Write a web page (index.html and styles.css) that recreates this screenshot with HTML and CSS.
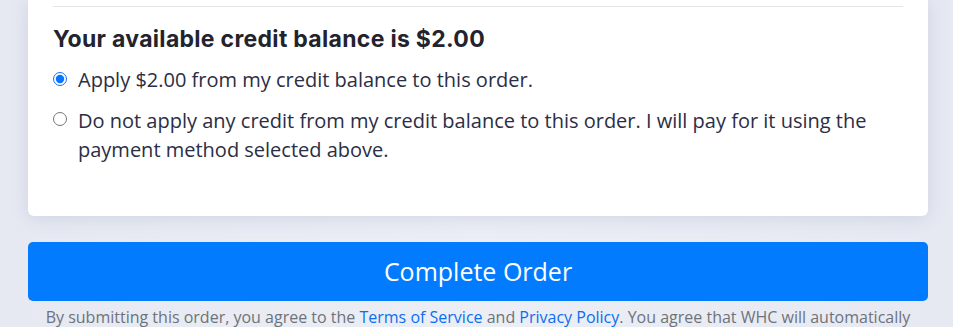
FILE: index.html
```html
<!DOCTYPE html>
<html lang="en">
<head>
<meta charset="utf-8">
<title>Checkout</title>
<link rel="stylesheet" href="styles.css">
</head>
<body>
<div class="page">
  <div class="card">
    <hr class="divider">
    <h3 class="credit-title">Your available credit balance is $2.00</h3>
    <div class="options">
      <label class="option">
        <input type="radio" name="applycredit" checked>
        <span>Apply $2.00 from my credit balance to this order.</span>
      </label>
      <label class="option">
        <input type="radio" name="applycredit">
        <span>Do not apply any credit from my credit balance to this order. I will pay for it using the payment method selected above.</span>
      </label>
    </div>
  </div>
  <button class="complete-btn" type="button">Complete Order</button>
  <p class="terms">By submitting this order, you agree to the <a href="#">Terms of Service</a> and <a href="#">Privacy Policy</a>. You agree that WHC will automatically</p>
</div>
</body>
</html>
```
FILE: styles.css
```css
html, body {
  margin: 0;
  padding: 0;
}
body {
  background: linear-gradient(90deg, #e6e9f2 0%, #eceef5 50%, #e6e9f2 100%);
  font-family: "Open Sans", "Liberation Sans", sans-serif;
  height: 327px;
  overflow: hidden;
}
.page {
  width: 900px;
  margin: 0 0 0 28px;
}
.card {
  background: #fff;
  border-radius: 0 0 6px 6px;
  padding: 6px 25px 52px;
  box-shadow: 0 2px 18px rgba(160, 170, 200, 0.35);
}
.divider {
  border: 0;
  border-top: 1px solid #e4e5e8;
  margin: 0;
}
.credit-title {
  font-family: "Inter", "Liberation Sans", sans-serif;
  font-weight: 700;
  font-size: 23px;
  color: #23232e;
  margin: 17px 0 11px;
  line-height: 30px;
  letter-spacing: 0.3px;
}
.options {
  display: flex;
  flex-direction: column;
  gap: 11.5px;
}
.option {
  display: flex;
  align-items: flex-start;
  gap: 11px;
  font-size: 20px;
  line-height: 29px;
  color: #2b2e45;
}
.option input {
  margin: 6.5px 0 0;
  width: 14px;
  height: 14px;
  flex: none;
  accent-color: #0a74ff;
}
.complete-btn {
  display: block;
  width: 100%;
  height: 59px;
  margin-top: 26px;
  border: 0;
  border-radius: 5px;
  background: #027bff;
  color: #fff;
  font-family: "Open Sans", "Liberation Sans", sans-serif;
  font-size: 25px;
  padding: 0;
}
.terms {
  margin: 4px -40px 0;
  text-align: center;
  font-size: 16px;
  line-height: 24px;
  color: #6d737a;
  white-space: nowrap;
}
.terms a {
  color: #0a6ff0;
  text-decoration: none;
}
```
